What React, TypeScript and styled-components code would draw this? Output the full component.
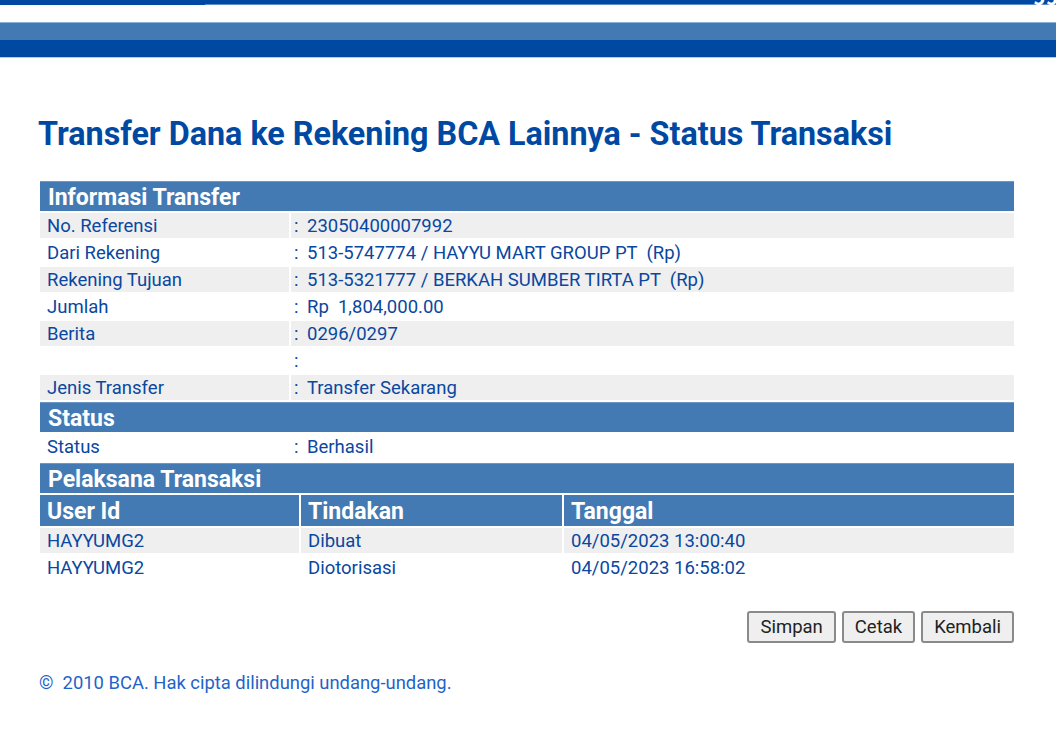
import React from "react";
import styled, { createGlobalStyle } from "styled-components";

const GlobalStyle = createGlobalStyle`
    html, body {
        margin: 0;
        padding: 0;
        background: #ffffff;
        font-family: Roboto, "Liberation Sans", Arial, sans-serif;
    }
`;

const TopStrip = styled.div`
    height: 5px;
    display: flex;
    background: #0049a2;
    overflow: hidden;
`;

const TopStripLeft = styled.div`
    width: 205px;
    border-bottom: 1px solid #0049a2;
`;

const TopStripRight = styled.div`
    flex: 1;
    border-bottom: 1px solid #5d8cc6;
    display: flex;
    justify-content: flex-end;
    align-items: flex-end;
`;

const TopStripText = styled.span`
    color: #ffffff;
    font-size: 22px;
    font-weight: 700;
    line-height: 1;
    margin-bottom: 0;
    margin-right: -2px;
`;

const Gap = styled.div`
    height: 17px;
`;

const MenuBar = styled.div`
    height: 17px;
    background: #437ab4;
    border-top: 1px solid #8fb0d6;
`;

const NavBar = styled.div`
    height: 17px;
    background: #0049a2;
    border-bottom: 1px solid #b9cde6;
`;

const Content = styled.main`
    padding: 57px 40px 0 38px;
`;

const Title = styled.h1`
    margin: 0 0 26px 0;
    font-size: 32.3px;
    font-weight: 700;
    color: #0049a2;
    line-height: 38px;
`;

const Table = styled.table`
    width: 100%;
    border-collapse: separate;
    border-spacing: 2px;
    table-layout: fixed;
    margin: 0;
`;

const SectionHead = styled.th`
    background: #437ab4;
    color: #ffffff;
    font-size: 23px;
    font-weight: 700;
    text-align: left;
    padding: 1px 8px 0;
    height: 28px;
    border-top: 1px solid #6d97c6;
`;

const ColHead = styled.th`
    background: #437ab4;
    color: #ffffff;
    font-size: 23px;
    font-weight: 700;
    text-align: left;
    padding: 2px 7px 0;
    height: 29px;
`;

const Row = styled.tr<{ $shade: boolean }>`
    background: ${props => (props.$shade ? "#efefef" : "#ffffff")};
`;

const Cell = styled.td`
    color: #0a47a0;
    font-size: 18.5px;
    padding: 2px 7px 0;
    height: 23px;
    line-height: 23px;
    white-space: nowrap;
`;

const ValueCell = styled(Cell)`
    padding-left: 3px;
    white-space: pre;
`;

const Colon = styled.span`
    display: inline-block;
    width: 13px;
`;

const Buttons = styled.div`
    display: flex;
    justify-content: flex-end;
    gap: 6px;
    margin: 29px 2px 0 0;
`;

const Button = styled.button`
    font-family: Roboto, "Liberation Sans", Arial, sans-serif;
    font-size: 18.5px;
    color: #222222;
    background: #efefef;
    border: 2px solid #8a8a8a;
    border-radius: 3px;
    height: 32px;
    padding: 0 11px;
    cursor: pointer;
`;

const Footer = styled.footer`
    margin: 29px 0 0 1px;
    color: #1f63c9;
    font-size: 18.4px;
`;

interface InfoItem {
    label: string;
    value: string;
}

const transferInfo: InfoItem[] = [
    { label: "No. Referensi", value: "23050400007992" },
    { label: "Dari Rekening", value: "513-5747774 / HAYYU MART GROUP PT  (Rp)" },
    { label: "Rekening Tujuan", value: "513-5321777 / BERKAH SUMBER TIRTA PT  (Rp)" },
    { label: "Jumlah", value: "Rp  1,804,000.00" },
    { label: "Berita", value: "0296/0297" },
    { label: "", value: "" },
    { label: "Jenis Transfer", value: "Transfer Sekarang" },
];

const actions = [
    { user: "HAYYUMG2", action: "Dibuat", date: "04/05/2023 13:00:40" },
    { user: "HAYYUMG2", action: "Diotorisasi", date: "04/05/2023 16:58:02" },
];

const InfoRow = ({ item, shade }: { item: InfoItem; shade: boolean }) => (
    <Row $shade={shade}>
        <Cell>{item.label}</Cell>
        <ValueCell>
            <Colon>:</Colon>
            {item.value}
        </ValueCell>
    </Row>
);

export default function App() {
    return (
        <>
            <GlobalStyle />
            <TopStrip>
                <TopStripLeft />
                <TopStripRight>
                    <TopStripText>gg</TopStripText>
                </TopStripRight>
            </TopStrip>
            <Gap />
            <MenuBar />
            <NavBar />
            <Content>
                <Title>Transfer Dana ke Rekening BCA Lainnya - Status Transaksi</Title>
                <Table>
                    <colgroup>
                        <col style={{ width: 249 }} />
                        <col />
                    </colgroup>
                    <tbody>
                        <tr>
                            <SectionHead colSpan={2}>Informasi Transfer</SectionHead>
                        </tr>
                        {transferInfo.map((item, i) => (
                            <InfoRow key={i} item={item} shade={i % 2 === 0} />
                        ))}
                        <tr>
                            <SectionHead colSpan={2}>Status</SectionHead>
                        </tr>
                        <InfoRow item={{ label: "Status", value: "Berhasil" }} shade={false} />
                    </tbody>
                </Table>
                <Table>
                    <colgroup>
                        <col style={{ width: 259 }} />
                        <col style={{ width: 261 }} />
                        <col />
                    </colgroup>
                    <tbody>
                        <tr>
                            <SectionHead colSpan={3}>Pelaksana Transaksi</SectionHead>
                        </tr>
                        <tr>
                            <ColHead>User Id</ColHead>
                            <ColHead>Tindakan</ColHead>
                            <ColHead>Tanggal</ColHead>
                        </tr>
                        {actions.map((a, i) => (
                            <Row key={i} $shade={i % 2 === 0}>
                                <Cell>{a.user}</Cell>
                                <Cell>{a.action}</Cell>
                                <Cell>{a.date}</Cell>
                            </Row>
                        ))}
                    </tbody>
                </Table>
                <Buttons>
                    <Button>Simpan</Button>
                    <Button>Cetak</Button>
                    <Button>Kembali</Button>
                </Buttons>
                <Footer>©&nbsp; 2010 BCA. Hak cipta dilindungi undang-undang.</Footer>
            </Content>
        </>
    );
}
